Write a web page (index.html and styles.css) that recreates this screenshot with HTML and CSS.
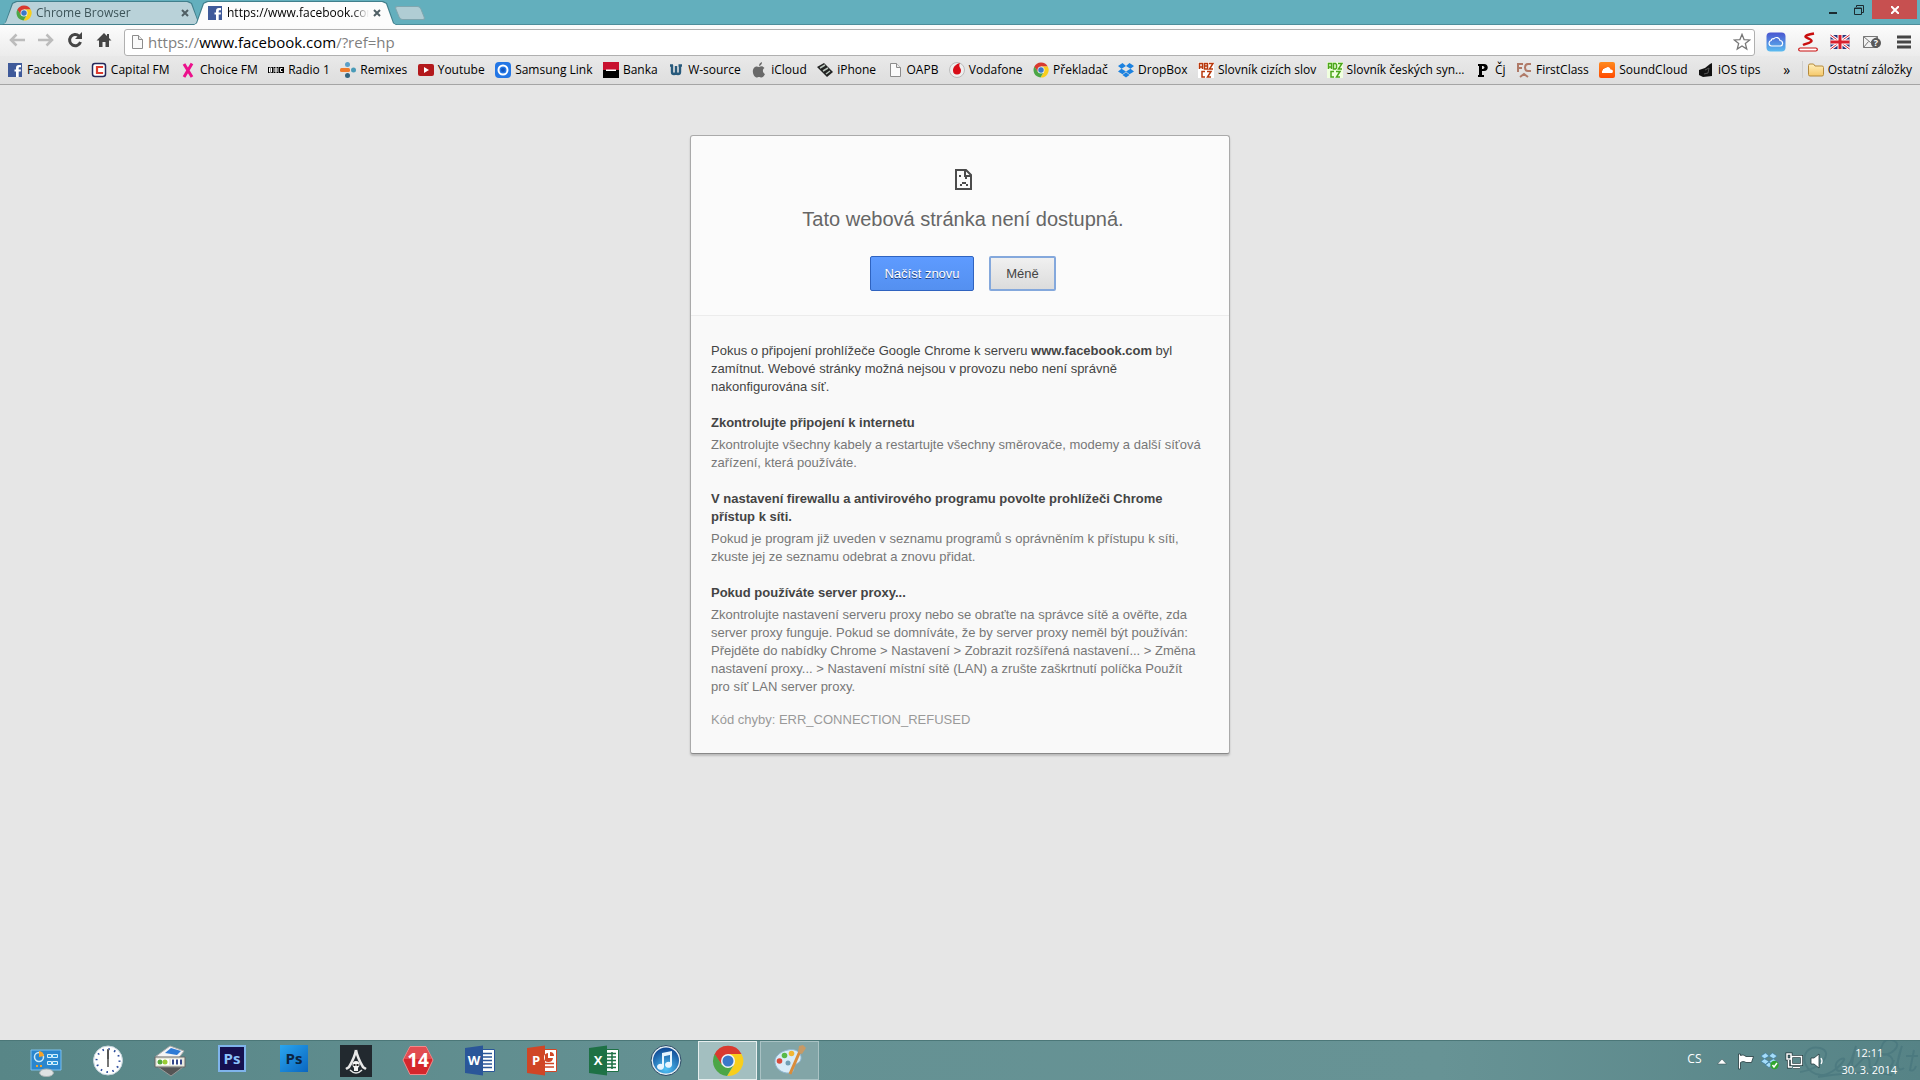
FILE: index.html
```
<!DOCTYPE html>
<html lang="cs">
<head>
    <meta charset="UTF-8">
    <meta name="viewport" content="width=device-width, initial-scale=1.0">
    <title>https://www.facebook.com/?ref=hp</title>
    <link rel="stylesheet" href="styles.css">
</head>
<body>
    <!-- Shared icons -->
    <svg class="defs" aria-hidden="true">
        <defs>
            <linearGradient id="blueSky" x1="0" y1="0" x2="0" y2="1"><stop offset="0" stop-color="#4a55d0"/><stop offset="1" stop-color="#5bbcf0"/></linearGradient>
            <linearGradient id="psBlue" x1="0" y1="0" x2="1" y2="1"><stop offset="0" stop-color="#2aa6ef"/><stop offset="1" stop-color="#0a66c0"/></linearGradient>
            <linearGradient id="folder" x1="0" y1="0" x2="0" y2="1"><stop offset="0" stop-color="#fff0bd"/><stop offset="1" stop-color="#f5c768"/></linearGradient>
            <linearGradient id="sound" x1="0" y1="0" x2="0" y2="1"><stop offset="0" stop-color="#ff8a1e"/><stop offset="1" stop-color="#ff4a00"/></linearGradient>
            <radialGradient id="note" cx=".5" cy=".8" r=".8"><stop offset="0" stop-color="#4fc3f7"/><stop offset="1" stop-color="#0b3f8c"/></radialGradient>
        </defs>
        <symbol id="chrome" viewBox="0 0 32 32">
            <path fill="#d93a2f" d="M16 16 9 19 2.500 9.500A15 15 0 0 1 29.500 9H16z"/>
            <path fill="#f8ce1c" d="M16 9h13.500A15 15 0 0 1 15 31l7-11z"/>
            <path fill="#4ca646" d="M2.700 9 10 20l11 1-6 10A15 15 0 0 1 2.700 9z"/>
            <circle cx="16" cy="16" r="7" fill="#f4f4f4"/>
            <circle cx="16" cy="16" r="5.500" fill="#3b78c8"/>
        </symbol>
        <symbol id="fb" viewBox="0 0 16 16">
            <path fill="#3f5a9a" d="M1 1h14v14H1z"/>
            <path fill="#fff" d="M9 15V9.500H7.500v-2H9V6c0-2 1-3 2.700-3H14v2.200h-1.300c-.8 0-1 .3-1 1v1.300H14l-.3 2h-2V15z"/>
        </symbol>
        <symbol id="page" viewBox="0 0 16 16">
            <path fill="#fafafa" stroke="#8c8c8c" d="M3.500 1.500h6l4 4v9h-10z"/>
            <path fill="#e8e8e8" stroke="#8c8c8c" d="M9.500 1.500v4h4"/>
        </symbol>
        <symbol id="dropbox" viewBox="0 0 16 16">
            <path d="M4.500 1 0 4l3.500 2.700L8 4zM11.500 1 16 4l-3.500 2.700L8 4zM0 9.500 3.500 6.800 8 9.500 4.500 12.300zM16 9.500l-3.500-2.700L8 9.500l3.500 2.800zM8 10.300 4.500 13 8 15.500l3.500-2.500z"/>
        </symbol>
    </svg>

    <!-- Browser window -->
    <header class="browser">
        <div class="titlebar">
            <div class="tab">
                <svg class="icon"><use href="#chrome"/></svg>
                <span class="tab-title">Chrome Browser</span>
                <button class="tab-close" aria-label="Zavřít kartu"><svg viewBox="0 0 8 8"><path d="M1 1l6 6M7 1 1 7"/></svg></button>
            </div>
            <div class="tab tab-active">
                <svg class="icon"><use href="#fb"/></svg>
                <span class="tab-title">https://www.facebook.com/?ref=hp</span>
                <button class="tab-close" aria-label="Zavřít kartu"><svg viewBox="0 0 8 8"><path d="M1 1l6 6M7 1 1 7"/></svg></button>
            </div>
            <button class="new-tab" aria-label="Nová karta"></button>
            <div class="window-buttons">
                <button aria-label="Minimalizovat"><svg width="10" height="10" viewBox="0 0 10 10"><path fill="#1c2b30" d="M1 7h8v2H1z"/></svg></button>
                <button aria-label="Obnovit"><svg width="10" height="10" viewBox="0 0 10 10"><path fill="none" stroke="#1c2b30" d="M2.500 2V.5h7v7H8"/><path fill="none" stroke="#1c2b30" d="M.5 3h7v6.500h-7zM0 3.500h8"/></svg></button>
                <button class="window-close" aria-label="Zavřít"><svg width="8" height="8" viewBox="0 0 8 8"><path stroke="#fff" stroke-width="2" d="M0 0l8 8M8 0 0 8"/></svg></button>
            </div>
        </div>

        <div class="toolbar">
            <button aria-label="Zpět"><svg viewBox="0 0 18 18"><path fill="none" stroke="#bcbcbc" stroke-width="2.500" d="M17 9H3M8.500 3.500 3 9l5.500 5.500"/></svg></button>
            <button aria-label="Vpřed"><svg viewBox="0 0 18 18"><path fill="none" stroke="#bcbcbc" stroke-width="2.500" d="M1 9h14M9.500 3.500 15 9l-5.500 5.500"/></svg></button>
            <button aria-label="Načíst znovu"><svg viewBox="0 0 18 18"><path fill="none" stroke="#454545" stroke-width="3" d="M13 5a5.600 5.600 0 1 0 1.500 6"/><path fill="#454545" d="M16 1v7H9z"/></svg></button>
            <button aria-label="Domů"><svg viewBox="0 0 18 18"><path fill="#454545" d="M9 2 1.500 9.500H4V16h3.500v-5h3v5H14V9.500h2.500L14 7V3h-2v2z"/></svg></button>
            <div class="omnibox">
                <svg class="icon"><use href="#page"/></svg>
                <a class="url" href="#"><span>https://</span>www.facebook.com<span>/?ref=hp</span></a>
                <button aria-label="Přidat do záložek"><svg viewBox="0 0 20 20"><path fill="#fff" stroke="#777" stroke-width="1.400" d="m10 1.500 2.300 5.800 6.200.4-4.800 4 1.600 6.100L10 14.400l-5.300 3.400 1.600-6.100-4.800-4 6.200-.4z"/></svg></button>
            </div>
            <div class="extensions">
                <button aria-label="iCloud"><svg viewBox="0 0 20 20"><rect x=".5" y=".5" width="19" height="19" rx="4" fill="url(#blueSky)"/><path fill="none" stroke="#fff" stroke-width="1.200" d="M5.500 14a2.800 2.800 0 0 1-.3-5.500 2 2 0 0 1 2.500-1.700 3.600 3.600 0 0 1 6.300 1.700A2.800 2.800 0 0 1 14.500 14z"/></svg></button>
                <button aria-label="Seznam"><svg viewBox="0 0 20 20"><path fill="none" stroke="#c90e0e" stroke-width="2.500" d="M16 1.500c-5 1-9 2-8.500 3.300S14 7 13.500 9 8 11.500 5 13"/><rect x=".7" y="16" width="18.600" height="3" rx="1.500" fill="#fff" stroke="#c90e0e" stroke-width="1.200"/></svg></button>
                <button aria-label="Angličtina"><svg viewBox="0 0 20 20"><path fill="#29337a" d="M.5 3h19v14H.5z"/><path stroke="#fff" stroke-width="3" d="m.5 3 19 14m0-14L.5 17"/><path stroke="#d8202f" d="m.5 3 19 14m0-14L.5 17"/><path stroke="#fff" stroke-width="5" d="M10 3v14M.5 10h19"/><path stroke="#d8202f" stroke-width="3" d="M10 3v14M.5 10h19"/></svg></button>
                <button aria-label="Pošta"><svg viewBox="0 0 20 20"><path fill="#f2f2f2" stroke="#777" d="M1.500 4.500h14v11h-14z"/><path fill="none" stroke="#777" d="m1.500 4.500 7 6 7-6M1.500 15.500l5-6"/><circle cx="14" cy="11" r="5" fill="#5a5a5a"/><text x="14" y="14" class="badge-mark">?</text></svg></button>
                <button class="menu" aria-label="Nabídka"><svg viewBox="0 0 20 20"><path stroke="#454545" stroke-width="3" d="M3 5h14M3 10h14M3 15h14"/></svg></button>
            </div>
        </div>

        <!-- Bookmarks -->
        <nav class="bookmarks">
            <div class="bookmark-list">
                <a href="#"><svg class="icon"><use href="#fb"/></svg>Facebook</a>
                <a href="#"><svg class="icon" viewBox="0 0 16 16"><rect x="1.500" y="1.500" width="13" height="13" rx="2.500" fill="#fff" stroke="#25285a" stroke-width="1.500"/><path fill="none" stroke="#dc3b2e" stroke-width="2.200" d="M11 6V5H6v6h5v-1"/></svg>Capital FM</a>
                <a href="#"><svg class="icon" viewBox="0 0 16 16"><path fill="none" stroke="#ec118c" stroke-width="3" d="m4 2 8 13M12 1.500 4 15"/></svg>Choice FM</a>
                <a href="#"><svg class="icon" viewBox="0 0 16 16"><path d="M0 5h5v6H0zM5.500 5h5v6h-5zM11 5h5v6h-5z"/><path fill="none" stroke="#fff" d="M1.500 6v4h2V6zM1.500 8h2M7 6v4h2V6zM7 8h2M14.500 6.500h-2v3h2"/></svg>Radio 1</a>
                <a href="#"><svg class="icon" viewBox="0 0 16 16"><circle cx="7.500" cy="2.500" r="2.500" fill="#5b9fc9"/><rect y="6" width="10" height="4" rx="1.500" fill="#f07b2c"/><circle cx="13.500" cy="8" r="2.500" fill="#4a9bb8"/><circle cx="7.500" cy="13.500" r="2.500" fill="#33647e"/></svg>Remixes</a>
                <a href="#"><svg class="icon" viewBox="0 0 16 16"><rect y="2" width="16" height="12" rx="2" fill="#b3191c"/><path fill="#fff" d="m6 5 5 3-5 3z"/></svg>Youtube</a>
                <a href="#"><svg class="icon" viewBox="0 0 16 16"><rect width="16" height="16" rx="4" fill="#2376e5"/><circle cx="8" cy="8" r="4.500" fill="none" stroke="#fff" stroke-width="2"/><circle cx="8" cy="8" r="2" fill="#1457bd"/></svg>Samsung Link</a>
                <a href="#"><svg class="icon" viewBox="0 0 16 16"><path fill="#c8102e" d="M0 0h16v8H0z"/><path d="M0 8h16v8H0z"/><path fill="#fff" d="M3 7.500h10v1.500H3z"/></svg>Banka</a>
                <a href="#"><svg class="icon" viewBox="0 0 16 16"><path fill="none" stroke="#285a7c" stroke-width="2.400" d="M4 3v7q0 2 2 2t2-2V4v6q0 2 2 2t2-2V3M2 3.500h3M10.500 3.500H14"/></svg>W-source</a>
                <a href="#"><svg class="icon" viewBox="0 0 16 16"><path fill="#696969" d="M8 5c2-1 4-1 5.500 1-2.500 1.500-2 5 .5 6-1 2-2 3.500-3.500 3.500-1 0-1.500-.5-2.500-.5s-1.500.5-2.500.5C2.500 15.500-.5 7 4.500 4.800 6 4.300 7 5 8 5zM8 4q0-3 3-4 0 3-3 4"/></svg>iCloud</a>
                <a href="#"><svg class="icon" viewBox="0 0 16 16"><path fill="#222" d="m0 5 7-4 9 9-6 5z"/><path stroke="#b8c4bb" stroke-width="1.500" d="m3 6 5-3M6 9l5-3M9 12l4-3"/></svg>iPhone</a>
                <a href="#"><svg class="icon"><use href="#page"/></svg>OAPB</a>
                <a href="#"><svg class="icon" viewBox="0 0 16 16"><circle cx="8" cy="8" r="7.500" fill="#eee" stroke="#bbb"/><path fill="#d80d18" d="M11 1C7 2 4 5 4 8.500a4 4 0 1 0 8 0C12 6 9 5 11 1z"/></svg>Vodafone</a>
                <a href="#"><svg class="icon"><use href="#chrome"/></svg>Překladač</a>
                <a href="#"><svg class="icon" fill="#1c82e0"><use href="#dropbox"/></svg>DropBox</a>
                <a href="#"><svg class="icon" viewBox="0 0 16 16"><path fill="#fff" d="M0 0h16v16H0z"/><g fill="none" stroke="#b8380c" stroke-width="1.500"><path d="M1.500 7V1.500h3V7M1.500 5h3M6.500 7V1.500h3V7zM6.500 4h3M11 1.500h4L11.500 7H15M7 9.500H4V15h3M9 9.500h4L9.500 15H13"/></g></svg>Slovník cizích slov</a>
                <a href="#"><svg class="icon" viewBox="0 0 16 16"><path fill="#f0ffdf" d="M0 0h16v16H0z"/><g fill="none" stroke="#4ca61c" stroke-width="1.500"><path d="M1.500 7V1.500h3V7M1.500 5h3M6.500 7V1.500h2l1 1V6l-1 1zM11 1.500h4L11.500 7H15M7 9.500H4V15h3M9 9.500h4L9.500 15H13"/></g></svg>Slovník českých syn...</a>
                <a href="#"><svg class="icon" viewBox="0 0 16 16"><path fill-rule="evenodd" d="M3 2h6c5 0 5 7 0 7H7v4h2v2H3v-2h1V4H3zm4 2v3h1q3-1.500 0-3z"/></svg>Čj</a>
                <a href="#"><svg class="icon" viewBox="0 0 16 16"><path fill="none" stroke="#b07a68" stroke-width="2" d="M2 10V2h5M2 6h4M15 2h-3q-3 0-3 3.500T12 9h3M4 15l4-3 4 3"/></svg>FirstClass</a>
                <a href="#"><svg class="icon" viewBox="0 0 16 16"><rect width="16" height="16" rx="2" fill="url(#sound)"/><path fill="#fff" d="M3 11V8.500h1V7h1v-.5h1V6h1c2-2 4-.5 4.500 1.500C14.500 7 14.500 11 12.500 11z"/></svg>SoundCloud</a>
                <a href="#"><svg class="icon" viewBox="0 0 16 16"><path fill="#111" d="m1 8 6-2 5-4 2-1v13l-9 1-4-2z"/><path fill="none" stroke="#555" d="m7 8 4-2-1 5-4 1"/></svg>iOS tips</a>
            </div>
            <button class="more" aria-label="Další záložky">»</button>
            <a class="other" href="#"><svg class="icon" viewBox="0 0 16 16"><path fill="url(#folder)" stroke="#b58a3c" d="M.5 3.500q0-1.500 1.500-1.500h3.500L7 4h7q1.500 0 1.500 1.500v7q0 1.500-1.500 1.500H2q-1.500 0-1.500-1.500z"/></svg>Ostatní záložky</a>
        </nav>
    </header>

    <!-- Error page -->
    <main>
        <div class="card">
            <div class="card-top">
                <svg class="sad" width="17" height="21" viewBox="0 0 17 21"><path fill="none" stroke="#4c4c4c" stroke-width="2" d="M1 1h10l5 5v14H1z"/><path fill="none" stroke="#4c4c4c" stroke-width="2" d="M10 1v6h6"/><path fill="#4c4c4c" d="M4 6h2v2H4zM10 8h2v2h-2zM7 13h4v2H7zM5 15h2v2H5zM11 15h2v2h-2z"/></svg>
                <h1>Tato webová stránka není dostupná.</h1>
                <div class="buttons">
                    <button class="reload">Načíst znovu</button>
                    <button class="less">Méně</button>
                </div>
            </div>
            <div class="details">
                <p class="summary">Pokus o připojení prohlížeče Google Chrome k serveru <b>www.facebook.com</b> byl zamítnut. Webové stránky možná nejsou v provozu nebo není správně nakonfigurována síť.</p>
                <h2>Zkontrolujte připojení k internetu</h2>
                <p>Zkontrolujte všechny kabely a restartujte všechny směrovače, modemy a další síťová zařízení, která používáte.</p>
                <h2>V nastavení firewallu a antivirového programu povolte prohlížeči Chrome přístup k síti.</h2>
                <p>Pokud je program již uveden v seznamu programů s oprávněním k přístupu k síti, zkuste jej ze seznamu odebrat a znovu přidat.</p>
                <h2>Pokud používáte server proxy...</h2>
                <p>Zkontrolujte nastavení serveru proxy nebo se obraťte na správce sítě a ověřte, zda server proxy funguje. Pokud se domníváte, že by server proxy neměl být používán: Přejděte do nabídky Chrome &gt; Nastavení &gt; Zobrazit rozšířená nastavení... &gt; Změna nastavení proxy... &gt; Nastavení místní sítě (LAN) a zrušte zaškrtnutí políčka Použít pro síť LAN server proxy.</p>
                <p class="code">Kód chyby: ERR_CONNECTION_REFUSED</p>
            </div>
        </div>
    </main>

    <!-- Taskbar -->
    <footer class="taskbar">
        <button aria-label="Ovládací panely"><svg viewBox="0 0 32 32"><path fill="#2b86cd" stroke="#7cc0ee" d="M1 5h30v20H1z"/><circle cx="9" cy="12" r="4.500" fill="none" stroke="#c8e8fa" stroke-width="1.500"/><path fill="#f5a32a" d="M9 12V6a6 6 0 0 1 5 5z"/><path fill="#2b9be0" stroke="#d5effc" d="M17.500 9.500h4v3h-4zM22.500 9.500h5v3h-5zM17.500 16.500h4v3h-4zM22.500 16.500h5v3h-5z"/><path fill="#f5a32a" d="M6 20h2v2H6zM10 20h2v2h-2z"/><path fill="#dfe3e4" stroke="#aab3b5" d="M9.500 28q1-4 7-4t7 4q-1 3.500-7 3.500t-7-3.500z"/></svg></button>
        <button aria-label="Hodiny"><svg viewBox="0 0 32 32"><circle cx="16" cy="15.500" r="14.500" fill="#fff" stroke="#c5d3dc"/><circle cx="16" cy="15.500" r="11.500" fill="none" stroke="#2a4a9c" stroke-width="2" stroke-dasharray="1.500 4.520"/><path stroke="#777" stroke-width="2" d="M16 4v18"/><path stroke="#333" d="M16 5v9"/></svg></button>
        <button aria-label="Programy"><svg viewBox="0 0 32 32"><path fill="#555" stroke="#999" d="m4 22 13 9 12-9z"/><path fill="#f4f4f4" stroke="#aaa" d="M1 12 16 1l14 5-6 8z"/><path fill="#2f7bd5" d="m11 8 6-5 10 3-4 4z"/><path fill="#e8e8dc" stroke="#666" d="M1 12h30v10H1z"/><path fill="#fff" d="M3 14h12v6H3zM17 14h11v6H17z"/><circle cx="6" cy="17" r="2.500" fill="#55a83d"/><circle cx="11" cy="17" r="2.500" fill="#9bcc34"/><path stroke="#34478a" stroke-width="2" d="M19 14.500v5M23 14.500v5M27 14.500v5"/></svg></button>
        <button aria-label="Photoshop"><svg viewBox="0 0 32 32"><path fill="#15104f" stroke="#7fb4ec" stroke-width="2" d="M3 1h26v25H3z"/><text x="16" y="19" class="ps ps-light">Ps</text></svg></button>
        <button aria-label="Photoshop CS"><svg viewBox="0 0 32 32"><path fill="url(#psBlue)" d="M2 0h28v27H2z"/><text x="16" y="19" class="ps">Ps</text></svg></button>
        <button aria-label="Assassin's Creed"><svg viewBox="0 0 32 32"><path fill="#22292f" d="M0 0h32v32H0z"/><path fill="none" stroke="#e8e8e8" stroke-width="2.500" d="M16 5c-1 6-4 12-7 17l-3 2M16 5c1 6 4 12 7 17l3 2"/><path fill="none" stroke="#e8e8e8" stroke-width="1.500" d="M10 25q6 6 12 0"/><circle cx="16" cy="19.500" r="3.500" fill="#f5f5f5"/><path fill="#f5f5f5" d="M14 22h4v4h-4z"/><path fill="#222" d="M13.500 19h2v2h-2zM16.500 19h2v2h-2z"/></svg></button>
        <button aria-label="FIFA 14"><svg viewBox="0 0 32 32"><path fill="#d5262c" stroke="#f2898b" d="M8 1.500h16L31 15l-7 14.500H8L1 15z"/><path fill="#e9686b" opacity=".6" d="M8 2h16l6 12H2z"/><text x="16" y="22" class="fourteen">14</text></svg></button>
        <button aria-label="Word"><svg viewBox="0 0 32 32"><path fill="#fff" stroke="#2a5699" d="M16 4.500h14.500v22H16z"/><path stroke="#2a5699" stroke-width="1.500" d="M19 8.500h9M19 12h9M19 15.500h9M19 19h9M19 22.500h9"/><path fill="#2a5699" d="m1 3 18-2.500v30L1 28z"/><text x="10" y="20" class="office">W</text></svg></button>
        <button aria-label="PowerPoint"><svg viewBox="0 0 32 32"><path fill="#fff" stroke="#d04626" d="M16 4.500h14.500v22H16z"/><path stroke="#d04626" stroke-width="1.500" d="M19 18.500h9M19 22h9"/><path fill="#d04626" d="M22 8a4.500 4.500 0 1 0 5 5h-5zM24 7v4h4a4 4 0 0 0-4-4zM1 3l18-2.500v30L1 28z"/><text x="10" y="20" class="office">P</text></svg></button>
        <button aria-label="Excel"><svg viewBox="0 0 32 32"><path fill="#fff" stroke="#1e7145" d="M16 4.500h14.500v22H16z"/><path fill="none" stroke="#1e7145" stroke-width="1.500" d="M19 8.500h9M19 12h9M19 15.500h9M19 19h9M19 22.500h9M24 7v17"/><path fill="#1e7145" d="m1 3 18-2.500v30L1 28z"/><text x="10" y="20" class="office">X</text></svg></button>
        <button aria-label="iTunes"><svg viewBox="0 0 32 32"><circle cx="16" cy="15.500" r="14" fill="url(#note)" stroke="#e4edf2" stroke-width="2"/><circle cx="16" cy="15.500" r="15" fill="none" stroke="#2b4a66"/><path fill="#e6f5ff" d="M12 8l10-2v14a3.500 3 0 1 1-2-3v-7l-6 1.200V22a3.500 3 0 1 1-2-3z"/></svg></button>
        <button class="task-active" aria-label="Chrome"><svg><use href="#chrome"/></svg></button>
        <button class="task-open" aria-label="Malování"><svg viewBox="0 0 32 32"><path fill="#d8ecf8" stroke="#8fb6cf" d="M14 5c8-2 14 3 13 9-1 4-4 4-6 6-2 3 0 7-5 8C7 29 0 22 1 15 2 10 8 6 14 5z"/><circle cx="5.500" cy="16" r="2.800" fill="#d94b3b"/><circle cx="10.500" cy="10.500" r="2.800" fill="#58b947"/><circle cx="17.500" cy="8.500" r="2.800" fill="#f2b632"/><circle cx="14" cy="18" r="2.500" fill="#6f9fb4"/><path stroke="#d98c3a" stroke-width="3" d="m26 6-10 23"/><path fill="#c79a66" d="m24 7 1-6 4-1 3 3-4 6z"/></svg></button>

        <svg class="scribble" width="130" height="40" viewBox="0 0 130 40"><path d="M10 32C30 30 45 12 30 8S8 22 22 32s30-8 32-12-10 0-8 8 14-2 16-10l4-12c-4 14-6 26 0 20s8-10 12-8-2 14 6 8 4-30 18-26-4 18-10 14c16 0 12 16 2 14M104 20l-4 10c8 2 10-20 12-24-6 16-6 28 2 22M124 10l-4 20q4 2 6-4M116 16h12M28 37q50-8 74-2"/></svg>

        <div class="tray">
            <span class="lang">CS</span>
            <button aria-label="Zobrazit skryté ikony"><svg viewBox="0 0 18 18"><path fill="#fff" stroke="#33494d" stroke-width=".5" d="m4.500 12 4.500-5 4.500 5z"/></svg></button>
            <button aria-label="Centrum akcí"><svg viewBox="0 0 18 18"><path fill="#fff" stroke="#22383c" stroke-width=".8" d="M1.500 2h2v1.500c3-1 4 0 5.500 1h7.500l-2 6H9c-2-1.500-4-1-5.500 0V17h-2z"/></svg></button>
            <button aria-label="Dropbox"><svg viewBox="0 0 18 18"><g fill="#a5dcf8" stroke="#2c72a3" stroke-width=".5"><use href="#dropbox" width="16" height="16"/></g><circle cx="13.500" cy="13" r="4.200" fill="#31a52f"/><path fill="none" stroke="#fff" stroke-width="1.500" d="m11.500 13 1.500 2 3-4"/></svg></button>
            <button aria-label="Síť"><svg viewBox="0 0 18 18"><path fill="none" stroke="#22383c" stroke-width="3" d="M6.500 4.500h10v8h-10zM8 15.500h7M3.500 8v7H7M2 2h4v5H2z"/><path fill="none" stroke="#fff" stroke-width="1.500" d="M6.500 4.500h10v8h-10zM8 15.500h7M3.500 8v7H7M2 2h4v5H2z"/></svg></button>
            <button aria-label="Hlasitost"><svg viewBox="0 0 18 18"><path fill="#fff" stroke="#22383c" stroke-width=".8" d="M2 6h3l5-4v14l-5-4H2z"/><path fill="none" stroke="#fff" stroke-width="1.300" d="M12 6q2 3 0 6"/></svg></button>
            <div class="clock">
                <time>12:11</time>
                <time>30. 3. 2014</time>
            </div>
        </div>
    </footer>
</body>
</html>
```
FILE: styles.css
```
* {
    box-sizing: border-box;
}

body {
    margin: 0;
    min-height: 100vh;
    display: flex;
    flex-direction: column;
    background-color: #e6e6e6;
    font-family: "Open Sans", "Noto Sans", sans-serif;
    font-size: 12px;
    color: #000;
}

button {
    font-family: inherit;
    padding: 0;
    border: none;
    background: none;
    cursor: pointer;
}

a {
    color: inherit;
    text-decoration: none;
}

svg {
    display: block;
}

.defs {
    position: absolute;
    width: 0;
    height: 0;
}

.icon {
    width: 16px;
    height: 16px;
    flex: none;
}

/* Tabs */
.titlebar {
    display: flex;
    align-items: flex-end;
    height: 25px;
    padding-left: 2px;
    background-color: #63afbd;
    box-shadow: inset 0 -1px #4d8e9b;
}

.tab {
    display: flex;
    align-items: center;
    gap: 4px;
    width: 200px;
    height: 24px;
    padding: 0 13px 1px 14px;
    margin-right: -9px;
    background-color: #417f8c;
    clip-path: polygon(0 100%, 3px 92%, 10px 8%, 14px 0, 186px 0, 190px 8%, 197px 92%, 200px 100%);
    color: #3d5459;
    position: relative;
    isolation: isolate;
}

.tab::before {
    content: "";
    position: absolute;
    inset: 1px;
    z-index: -1;
    background-color: #b9d2d9;
    clip-path: polygon(0 100%, 3px 92%, 10px 8%, 14px 0, 184px 0, 188px 8%, 195px 92%, 198px 100%);
}

.tab-active {
    width: 204px;
    padding-right: 16px;
    color: #000;
    clip-path: polygon(0 100%, 3px 92%, 10px 8%, 14px 0, 190px 0, 194px 8%, 201px 92%, 204px 100%);
}

.tab-active::before {
    background-color: #fcfcfc;
    bottom: 0;
    clip-path: polygon(0 100%, 3px 92%, 10px 8%, 14px 0, 188px 0, 192px 8%, 199px 92%, 202px 100%);
}

.tab-title {
    flex: 1;
    overflow: hidden;
    white-space: nowrap;
    -webkit-mask-image: linear-gradient(90deg, #000 88%, transparent);
    mask-image: linear-gradient(90deg, #000 88%, transparent);
}

.tab-close {
    width: 8px;
    height: 8px;
}

.tab-close svg {
    fill: none;
    stroke: #4f5f64;
    stroke-width: 2;
}

.new-tab {
    align-self: center;
    width: 26px;
    height: 14px;
    margin-left: 9px;
    background-color: #b0cdd4;
    border: 1px solid #7fa6af;
    border-radius: 3px;
    transform: skewX(22deg);
}

.window-buttons {
    display: flex;
    align-self: flex-start;
    margin-left: auto;
    margin-right: 3px;
}

.window-buttons button {
    width: 26px;
    height: 19px;
    display: grid;
    place-items: center;
}

.window-buttons .window-close {
    width: 45px;
    background-color: #c75050;
}

/* Toolbar */
.toolbar {
    display: flex;
    align-items: center;
    gap: 11px;
    height: 31px;
    padding: 0 6px 1px 8px;
    background: linear-gradient(#fcfcfc, #ececec);
}

.toolbar button svg {
    width: 18px;
    height: 18px;
}

.omnibox {
    flex: 1;
    display: flex;
    align-items: center;
    gap: 3px;
    height: 27px;
    margin-top: 4px;
    padding: 0 3px 0 4px;
    background-color: #fff;
    border: 1px solid #b0b0b0;
    border-radius: 3px;
}

.url {
    flex: 1;
    font-size: 15px;
}

.url span {
    color: #808080;
}

.extensions {
    display: flex;
    gap: 12px;
    margin-top: 3px;
}

.extensions button svg {
    width: 20px;
    height: 20px;
}

.badge-mark {
    font-size: 9px;
    font-weight: bold;
    text-anchor: middle;
    fill: #fff;
}

/* Bookmarks */
.bookmarks {
    display: flex;
    align-items: center;
    height: 29px;
    padding: 0 8px 1px 7px;
    background: linear-gradient(#e9e9e9, #dedede);
    border-bottom: 1px solid #a5a5a5;
    white-space: nowrap;
}

.bookmark-list {
    flex: 1;
    display: flex;
    justify-content: space-between;
}

.bookmarks a {
    display: flex;
    align-items: center;
    gap: 4px;
}

.more {
    width: 38px;
    padding-left: 14px;
    font-size: 14px;
}

.bookmarks .other {
    margin-left: 3px;
    padding-left: 5px;
    border-left: 1px solid #cfcfcf;
}

/* Error page */
main {
    flex: 1;
    padding-top: 50px;
    font-family: "Liberation Sans", Arial, sans-serif;
}

.card {
    max-width: 540px;
    margin: 0 auto;
    background-color: #fbfbfb;
    border: 1px solid #aaa;
    border-bottom-color: #888;
    border-radius: 3px;
    box-shadow: 0 2px 2px #bbb;
}

.card-top {
    display: flex;
    flex-direction: column;
    align-items: center;
    padding: 33px 0 24px 6px;
    border-bottom: 1px solid #ececec;
}

h1 {
    margin: 16px 0 24px;
    font-size: 20px;
    font-weight: normal;
    line-height: 26px;
    color: #666;
}

.buttons {
    display: flex;
    gap: 15px;
}

.buttons button {
    height: 35px;
    border-radius: 2px;
    font-size: 13px;
}

.reload {
    width: 104px;
    color: #fff;
    background: linear-gradient(#5e9bff, #5490f0);
    border: 1px solid #2f63c0;
    text-shadow: 0 1px #1f3f7f;
}

.less {
    width: 67px;
    color: #444;
    background: linear-gradient(#f0f0f0, #dcdcdc);
    border: 2px solid #84a8dc;
}

.details {
    padding: 26px 26px 24px 20px;
    background-color: #f9f9f9;
    border-radius: 0 0 3px 3px;
    font-size: 13px;
    line-height: 18px;
}

.details p {
    margin: 0;
    color: #777;
}

.details .summary {
    color: #444;
}

h2 {
    margin: 18px 0 4px;
    font-size: 13px;
    line-height: 18px;
    color: #444;
}

.details .code {
    margin-top: 15px;
    color: #999;
}

/* Taskbar */
.taskbar {
    display: flex;
    align-items: center;
    gap: 3px;
    height: 40px;
    padding-left: 16px;
    background: linear-gradient(90deg, #588687, #649193 35%, #679395 75%, #568386);
    border-top: 1px solid #4b7778;
    position: relative;
}

.taskbar > button {
    display: grid;
    place-items: center;
    width: 59px;
    height: 39px;
    border: 1px solid transparent;
}

.taskbar > button svg {
    width: 32px;
    height: 32px;
}

.taskbar > .task-active {
    background-color: #a3bfc0;
    border: 1px solid #e6eeee;
}

.taskbar > .task-open {
    background-color: #82a5a7;
    border: 1px solid #a9c2c4;
}

.ps {
    font-size: 15px;
    font-weight: bold;
    text-anchor: middle;
    fill: #0b2440;
}

.ps-light {
    fill: #8cc3fb;
}

.fourteen {
    font: bold 19px "Open Sans", sans-serif;
    text-anchor: middle;
    fill: #fff;
}

.office {
    font-size: 13px;
    font-weight: bold;
    text-anchor: middle;
    fill: #fff;
}

.scribble {
    position: absolute;
    right: 0;
    bottom: 0;
    fill: none;
    stroke: #3d6c76;
    stroke-width: 2;
    opacity: .4;
}

.tray {
    display: flex;
    align-items: center;
    gap: 6px;
    margin-left: auto;
    padding-right: 23px;
    color: #fff;
    position: relative;
}

.tray svg {
    width: 18px;
    height: 18px;
}

.lang {
    margin-right: 6px;
    padding-bottom: 4px;
}

.clock {
    display: flex;
    flex-direction: column;
    align-items: center;
    margin-left: 8px;
    font-size: 11px;
    line-height: 17px;
}
```
